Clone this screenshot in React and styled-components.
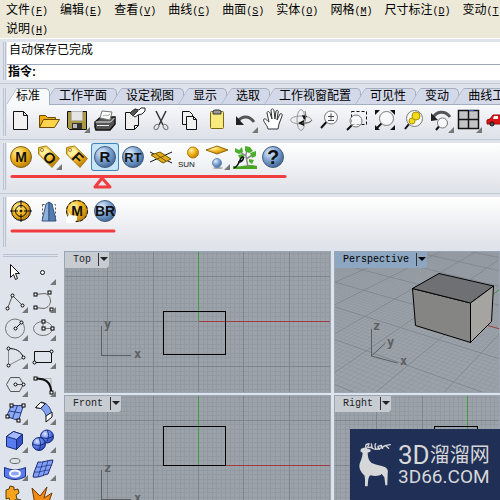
import React from "react";
import { useState } from "react";
import styled, { createGlobalStyle } from "styled-components";

const GlobalStyle = createGlobalStyle`
  * {
    box-sizing: border-box;
  }

  body {
    margin: 0;
    background: #dfe3eb;
    color: #000;
    font-family: "Liberation Sans", "Noto Sans CJK SC", sans-serif;
    font-size: 12px;
  }

  button, input {
    margin: 0;
    padding: 0;
    border: 0;
    background: none;
    color: inherit;
    font: inherit;
  }
`;

const Page = styled.div`
  display: flex;
  flex-direction: column;
  height: 100vh;
  overflow: hidden;
`;

const MenuBar = styled.nav`
  flex: none;
  height: 39px;
  padding-top: 1px;
  background: #ece9d8;
  border-bottom: 1px solid #fff;
`;

const MenuRow = styled.div`
  display: flex;
  height: 19px;
  overflow: hidden;
`;

const MenuItem = styled.button`
  flex: none;
  padding: 0 6px;
  line-height: 19px;
  white-space: nowrap;
`;

const Hotkey = styled.span`
  font-family: "Liberation Mono", monospace;
  font-size: 10px;
`;

const Band = styled.section`
  flex: none;
  display: flex;
  height: ${(props) => props.$height}px;
  padding: ${(props) => props.$top || 3}px 0 3px 3px;
  border-bottom: 1px solid ${(props) => (props.$last ? "transparent" : "#c3cad4")};
`;

const Grip = styled.div`
  flex: none;
  width: 3px;
  margin-right: 1px;
  border: solid #b9c2d0;
  border-width: 0 1px;
`;

const CommandBox = styled.div`
  flex: 1;
  min-width: 0;
  background: #fff;
`;

const History = styled.p`
  height: 23px;
  margin: 0;
  padding-left: 2px;
  border-bottom: 1px solid #9ba7b7;
  line-height: 17px;
`;

const Prompt = styled.label`
  display: flex;
  padding-left: 1px;
  font-weight: bold;
  line-height: 14px;
`;

const PromptInput = styled.input`
  flex: 1;
  min-width: 0;
  padding-left: 4px;
  outline: none;
`;

const Column = styled.div`
  flex: 1;
  min-width: 0;
`;

const TabStrip = styled.div`
  display: flex;
  height: 17px;
  overflow: hidden;
  box-shadow: inset 0 -1px #a4afc0;
`;

const Tab = styled.button`
  position: relative;
  isolation: isolate;
  flex: none;
  z-index: ${(props) => (props.$active ? 1 : 0)};
  height: 17px;
  margin-left: -6px;
  padding: 0 10px 0 15px;
  line-height: 15px;
  white-space: nowrap;

  &:first-child {
    margin-left: 0;
    padding-left: 9px;
  }

  &::before,
  &::after {
    content: "";
    position: absolute;
    z-index: -1;
    top: 0;
    bottom: ${(props) => (props.$active ? 0 : 1)}px;
    border: solid #a4afc0;
    background: ${(props) => (props.$active ? "#f8f9fb" : "#d3d9e8")};
  }

  &::before {
    left: 5px;
    width: 16px;
    border-width: 1px 0 0 1px;
    border-radius: 2px 0 0 0;
    transform: skewX(-32deg);
  }

  &:first-child::before {
    left: ${(props) => (props.$active ? 4 : 5)}px;
  }

  &::after {
    left: 14px;
    right: 0;
    border-width: 1px 1px 0 0;
    border-radius: 0 5px 0 0;
  }
`;

const ToolPanel = styled.div`
  position: relative;
  height: ${(props) => props.$height}px;
  overflow: hidden;
  background: linear-gradient(${(props) => props.$from || "#fff"}, #dfe2e9);
`;

const Tools = styled.div`
  display: flex;
  padding-top: ${(props) => props.$top || 0}px;
`;

const ToolButton = styled.button`
  flex: none;
  width: 28px;
  height: 28px;
  ${(props) =>
    props.$selected &&
    `
    border-radius: 3px;
    background: #c8e5f8;
    box-shadow: inset 0 0 0 1px #3f87b8;
  `}

  svg {
    display: block;
  }
`;

const Markup = styled.svg`
  position: absolute;
  left: 0;
  top: 0;
  pointer-events: none;
`;

const Workspace = styled.div`
  flex: 1;
  display: flex;
  min-height: 0;
  overflow: hidden;
`;

const Palette = styled.aside`
  flex: none;
  width: 64px;
  padding: 3px 0 0 1px;
`;

const PaletteGrip = styled.div`
  width: 55px;
  height: 3px;
  margin: 0 0 1px 2px;
  border: solid #b9c2d0;
  border-width: 1px 0;
`;

const PaletteGrid = styled.div`
  display: grid;
  grid-template-columns: repeat(2, 28px);
`;

const Viewports = styled.main`
  flex: 1;
  display: grid;
  grid-template-columns: 267fr 166fr;
  grid-template-rows: 142px 142px;
  gap: 2px 3px;
  min-width: 0;
`;

const Viewport = styled.section`
  position: relative;
  min-width: 0;
  overflow: hidden;
  border: 1px solid #9aa6b4;
  background: #9ba2aa;
`;

const Canvas = styled.svg`
  position: absolute;
  left: 0;
  top: 0;
  width: 100%;
  height: 100%;
`;

const ViewLabel = styled.button`
  position: relative;
  display: flex;
  align-items: center;
  height: 16px;
  padding: 0 1px 2px 8px;
  background: ${(props) => (props.$active ? "#8da6c1" : "#c7ccd2")};
  color: ${(props) => (props.$active ? "#000" : "#222")};
  font-family: "Liberation Mono", monospace;
  font-size: 10px;
  line-height: 13px;
  clip-path: polygon(0 0, 100% 0, 100% 14px, calc(100% - 2px) 100%, 0 100%);

  &::after {
    content: "";
    margin-left: 1px;
    border: solid transparent;
    border-width: 4px 4px 0;
    border-top-color: currentColor;
  }
`;

const LabelText = styled.span`
  padding-right: 7px;
  border-right: 1px solid #333;
`;

const Badge = styled.div`
  position: fixed;
  right: 0;
  bottom: 0;
  display: flex;
  align-items: center;
  gap: 5px;
  width: 150px;
  height: 71px;
  padding-left: 8px;
  background: #202f55;
  color: #d6d7d9;
`;

const BadgeText = styled.div`
  white-space: nowrap;
`;

const BadgeName = styled.div`
  display: flex;
  align-items: center;
  height: 24px;
  font-family: Roboto, "Noto Sans CJK SC", sans-serif;
  font-size: 20px;
  line-height: 24px;
`;

const BadgeBig = styled.span`
  font-size: 26px;
`;

const BadgeSite = styled.div`
  font-family: Roboto, sans-serif;
  font-size: 19px;
  line-height: 20px;
`;

const MENU = [
  ["文件", "F"],
  ["编辑", "E"],
  ["查看", "V"],
  ["曲线", "C"],
  ["曲面", "S"],
  ["实体", "O"],
  ["网格", "M"],
  ["尺寸标注", "D"],
  ["变动", "T"],
];

const TABS = [
  "标准",
  "工作平面",
  "设定视图",
  "显示",
  "选取",
  "工作视窗配置",
  "可见性",
  "变动",
  "曲线工具",
];

function Icon({ children, more }) {
  return (
    <svg width="28" height="28" viewBox="0 0 28 28" fill="none" stroke="#111">
      {children}
      {more && <path d="M27 21v6h-6z" fill="#777" stroke="none" />}
    </svg>
  );
}

function Ball({ text, color = "gold", size = 14 }) {
  return (
    <>
      <circle cx="14" cy="14" r="10.5" fill={`url(#${color})`} stroke={color === "gold" ? "#80641c" : "#435c7b"} />
      <text
        x="14"
        y={14 + size * 0.36}
        textAnchor="middle"
        fontSize={size}
        fontWeight="bold"
        fill="#111"
        stroke="none"
      >
        {text}
      </text>
    </>
  );
}

function Tag({ text }) {
  return (
    <>
      <path d="M3.500 4.500l8-1.500L24.500 15.500 17 24.500 3.500 11z" fill="url(#gold)" stroke="#a0821c" />
      <path d="M5 6l6-1 4 4-7 5-3-3z" fill="#fff09a" stroke="none" />
      <circle cx="7" cy="7" r="1.500" fill="#fff" stroke="#987a20" />
      <text
        x="14.500"
        y="20"
        textAnchor="middle"
        fontSize="15"
        fontWeight="bold"
        fill="#111"
        stroke="none"
        transform="rotate(45 14.500 15)"
      >
        {text}
      </text>
    </>
  );
}

function Lens({ x, y, r, hx, hy }) {
  const k = r * 0.7;
  return (
    <>
      <path d={`M${x - k} ${y + k}L${hx} ${hy}`} strokeWidth="2" />
      <circle cx={x} cy={y} r={r} fill="#fff" fillOpacity="0.6" stroke="#777" />
    </>
  );
}

function Nodes({ points, round }) {
  return points.map(([x, y]) => (
    <rect
      key={`${x}-${y}`}
      x={x - 1.5}
      y={y - 1.5}
      width="3"
      height="3"
      rx={round ? 1.5 : 0}
      fill="#fff"
      stroke="#000"
    />
  ));
}

const STANDARD_TOOLS = [
  ["新建", <Icon><path d="M6.500 5.500h10l4 4v14h-14z" fill="#f1f1f1" /><path d="M16.500 5.500v4h4" /></Icon>],
  ["打开", <Icon><path d="M4.500 21.500v-12h6l2 2h8v3" fill="#eda911" stroke="#6a4b00" /><path d="M4.500 21.500l4-8h16l-5 8z" fill="#ffd44d" stroke="#6a4b00" /></Icon>],
  ["保存", <Icon more><path d="M4.500 5.500h19v18h-17l-2-2z" fill="#a99a43" /><path d="M8.500 5.500h11v9h-11z" fill="#e5e5e5" stroke="#b5b5b5" /><path d="M9 17h10v6H9z" fill="#333" stroke="none" /><path d="M10 18h4v4h-4z" fill="#bbb" stroke="none" /></Icon>],
  ["打印", <Icon><path d="M4 16l6-5h14v7l-5 6H5l-1-3z" fill="#555" strokeWidth="1.500" /><path d="M9 12l2-7 10 1-2 8z" fill="#fff" stroke="#777" /><path d="M4.500 16h15l4-4M6 19.500h12" stroke="#eee" /><path d="M12 10c4-2 4 1 7-2" stroke="#999" /></Icon>],
  ["文件属性", <Icon><path d="M6.500 6.500h13v13l-4 4h-9z" fill="#eee" /><path d="M15.500 23.500v-4h4" /><path d="M11 7l5-4 4 1 2-2h4v3l-3 3-4 1-3 2z" fill="#fff" stroke="#222" /><path d="M11 7l5-4 3 2-5 5z" fill="#555" stroke="#333" /></Icon>],
  ["剪切", <Icon><path d="M9 5l7 14M19 5l-7 14" stroke="#333" strokeWidth="1.500" /><ellipse cx="9.500" cy="21" rx="2" ry="3" stroke="#777" transform="rotate(35 9.500 21)" /><ellipse cx="18.500" cy="21" rx="2" ry="3" stroke="#777" transform="rotate(-35 18.500 21)" /></Icon>],
  ["复制", <Icon><path d="M7.500 5.500h7l3 3v10h-10z" fill="#f1f1f1" /><path d="M11.500 10.500h7l3 3v10h-10z" fill="#f1f1f1" /><path d="M18.500 10.500v3h3" /></Icon>],
  ["粘贴", <Icon><rect x="7.500" y="5.500" width="13" height="17" rx="1" fill="#f9ea80" stroke="#7a6a15" /><path d="M10 8V5l2-1h4l2 1v3z" fill="#999" stroke="#333" /></Icon>],
  ["撤销", <Icon more><path d="M7 15c4-5 11-6 16 1" stroke="#555" strokeWidth="3" /><path d="M5 10v9h8z" fill="#222" stroke="none" /></Icon>],
  ["平移", <Icon><path d="M9 23c-1-5-6-8-4-10 2-1 4 3 5 3L8 7c0-2 2-2 3 0l2 6-1-9c1-2 3-1 3 1l1 8 1-8c1-1 3-1 2 2l-1 7 3-6c1-1 3 0 2 2l-3 8-1 5z" fill="#fff" stroke="#333" /></Icon>],
  ["旋转视图", <Icon><ellipse cx="14" cy="14" rx="10.500" ry="4" stroke="#999" /><ellipse cx="14" cy="14" rx="4" ry="10.500" stroke="#999" /><path d="M11 17l6-3v6zM15 9l5 1-3 4z" fill="#111" stroke="none" /><path d="M15 17c6 0 9-1 10-3M18 5c1 4 1 6 0 10" stroke="#666" /></Icon>],
  ["缩放", <Icon><Lens x={16} y={11.5} r={6.5} hx={6} hy={22} /><path d="M13 10.500h6M16 7.500v6M13 14.500h6" stroke="#444" /></Icon>],
  ["框选缩放", <Icon><path d="M8.500 5.500h15v13h-15z" strokeDasharray="3 2" /><Lens x={13} y={15} r={6} hx={4} hy={24} /></Icon>],
  ["最大范围", <Icon><Lens x={15.5} y={12.5} r={7} hx={6} hy={22} /><path d="M4 4h5L4 9zM24 4h-5l5 5zM4 24h5l-5-5zM24 24h-5l5-5z" fill="#111" stroke="none" /></Icon>],
  ["选取物件缩放", <Icon><Lens x={15.5} y={12.5} r={8} hx={6} hy={23} /><circle cx="13" cy="15" r="3" fill="#f2dc16" stroke="#a99000" /><circle cx="17" cy="10" r="4" fill="#f2dc16" stroke="#a99000" /></Icon>],
  ["复原视图", <Icon more><path d="M6 12c3-7 12-8 17-1" stroke="#555" strokeWidth="3" /><path d="M4 7v8l7-1z" fill="#222" stroke="none" /><Lens x={15.5} y={17} r={5} hx={9} hy={24} /></Icon>],
  ["四个工作视窗", <Icon more><path d="M3.500 4.500h20v18h-20zM13.500 4.500v18M3.500 13.500h20" fill="#c4c4c7" strokeWidth="1.500" /><path d="M14 4.500h5" stroke="#3650c8" /></Icon>],
  ["着色", <Icon><path d="M4 14l3-1 3-4h7l3 4h7v5H4z" fill="#d71515" stroke="#a00b0b" /><path d="M11 10h4v3h-5z" fill="#fff" stroke="none" /><circle cx="9" cy="18" r="2" fill="#555" /><circle cx="22" cy="18" r="2" fill="#555" /></Icon>],
];

const RENDER_TOOLS = [
  ["M", <Icon><Ball text="M" /></Icon>],
  ["O", <Icon more><Tag text="O" /></Icon>],
  ["F", <Icon><Tag text="F" /></Icon>],
  ["R", <Icon><Ball text="R" color="steel" size={15} /></Icon>],
  ["RT", <Icon><Ball text="RT" color="steel" size={13} /></Icon>],
  ["地平面", <Icon><path d="M3 9l22 11M3 19L25 9" /><path d="M4 12l9-3 11 7-8 4z" fill="#e2ad18" stroke="#735600" /><path d="M9 11l10 7M10 16l9-4" stroke="#735600" /></Icon>],
  ["太阳", <Icon><circle cx="18" cy="9.500" r="5.500" fill="url(#gold)" stroke="#b57b0c" /><text x="3" y="24" fontSize="8" fill="#111" stroke="none">SUN</text></Icon>],
  ["环境", <Icon more><path d="M3 7l11-4 11 4-11 4z" fill="url(#gold)" stroke="#8f6a10" /><ellipse cx="15" cy="25" rx="5" ry="1" fill="#aaa" stroke="none" /><circle cx="14" cy="20" r="4.500" fill="url(#steel)" stroke="#658db9" /></Icon>],
  ["植物", <Icon><path d="M2 23c8 2 15-3 24 0v3H2z" fill="#47a51f" stroke="none" /><path d="M17 24l-2-11-6-4M15 16l8-5M15 12l1-6" stroke="#888" strokeWidth="1.500" /><path d="M4 5l4 2 3-3 1 5-4 2-4-2zM14 3l5 1 3 4-4 2-4-2zM19 10l6-2v5l-4 2zM7 12l5-1 2 4-5 1zM18 16l5 1-2 4-3-2z" fill="#4cae2d" stroke="none" /><path d="M3 25c6-3 5-9 8-11 3 0 1 5-4 5" strokeWidth="1.500" /></Icon>],
  ["帮助", <Icon><Ball text="?" color="steel" size={20} /></Icon>],
];

const EXTRA_TOOLS = [
  ["目标", <Icon><circle cx="14" cy="14" r="9.500" fill="url(#gold)" /><circle cx="14" cy="14" r="5.500" /><path d="M14 3v8M14 17v8M3 14h8M17 14h8" /><circle cx="14" cy="14" r="1" fill="#111" /></Icon>],
  ["镜像", <Icon><path d="M7.500 7.500h13v16h-13z" stroke="#555" strokeDasharray="2 2" /><path d="M7 24l4-17 3-2v19z" fill="#8fb0dc" stroke="#33557f" /><path d="M14 5l3 2 4 17h-7z" fill="#527cb2" stroke="#33557f" /></Icon>],
  ["材质拾取", <Icon><Ball text="M" /><circle cx="14" cy="14" r="10.500" strokeDasharray="3 2" /><path d="M3 26v-5l3-3-1-4 3 4 6 1v4l-3 3z" fill="#fff" stroke="none" /></Icon>],
  ["BR", <Icon><Ball text="BR" color="steel" size={14} /></Icon>],
];

const PALETTE_TOOLS = [
  ["选取", <Icon><path d="M9.500 6.500v13l3-3 2 5 2-1-2-5h4z" fill="#fff" /></Icon>],
  ["点", <Icon more><circle cx="13.500" cy="14.500" r="2" fill="#fff" /></Icon>],
  ["多重直线", <Icon more><path d="M6.500 22.500l5-13 10 10" stroke="#555" /><Nodes round points={[[6.5, 22.5], [11.5, 9.5], [21.5, 19.5]]} /></Icon>],
  ["曲线", <Icon more><path d="M6 8.500l10-1c7 2 8 13-1 15l-9-1" stroke="#666" /><Nodes points={[[6.5, 8.5], [20.5, 6.5], [6.5, 21.5], [22.5, 23.5]]} /></Icon>],
  ["圆", <Icon more><circle cx="14" cy="14.500" r="9.500" stroke="#777" /><path d="M14.500 14.500l6-6" /><Nodes round points={[[14.5, 14.5], [20.5, 8.5]]} /></Icon>],
  ["椭圆", <Icon more><ellipse cx="14" cy="14.500" rx="9.500" ry="7" stroke="#777" /><path d="M14 7.500v7h9" stroke="#777" /><Nodes points={[[14.5, 7.5], [14.5, 14.5], [23.5, 14.5]]} /></Icon>],
  ["圆弧", <Icon more><path d="M22.500 15.500l-15 8v-17" stroke="#888" /><path d="M7.500 6.500c7 0 12 2 15 9" /><Nodes round points={[[7.5, 6.5], [22.5, 15.5], [7.5, 23.5]]} /></Icon>],
  ["矩形", <Icon more><path d="M5.500 9.500h17v11h-17z" /><Nodes round points={[[22.5, 9.5], [5.5, 20.5]]} /></Icon>],
  ["多边形", <Icon more><path d="M5.500 14.500l4-7h9l4 7-4 7h-9zM14.500 14.500h8" stroke="#555" /><Nodes round points={[[14.5, 14.5], [22.5, 14.5]]} /></Icon>],
  ["曲线圆角", <Icon more><path d="M7 8.500h15v14" stroke="#aaa" /><path d="M6.500 8.500c10 0 15 3 16 14" strokeWidth="2" /><Nodes points={[[6.5, 8.5], [22.5, 22.5]]} /></Icon>],
  ["曲面", <Icon more><path d="M10.500 7.500h12l-5 15-12-4z" fill="#8eaaf4" stroke="#253b84" /><path d="M16.500 7.500l-5 13M8 13l12 2" stroke="#253b84" /><Nodes points={[[10.5, 7.5], [22.5, 7.5], [17.5, 22.5], [6.5, 18.5]]} /></Icon>],
  ["放样", <Icon more><path d="M7 10c6-1 10 4 11 13l5-5C22 9 18 5 12 4z" fill="#83a1f2" stroke="#334984" /><path d="M6.500 9.500l5-5 5 1-5 5zM17 18l6-4v5l-6 5z" fill="#fff" /></Icon>],
  ["立方体", <Icon more><path d="M5.500 10.500l7-5 9 3v9l-6 6-10-3z" fill="#5a7cf0" stroke="#172b77" /><path d="M5.500 10.500l7-5 9 3-6 5z" fill="#a8baff" stroke="#172b77" /><path d="M15.500 13.500v10l6-6v-9z" fill="#3553c6" stroke="#172b77" /></Icon>],
  ["布尔运算", <Icon more><circle cx="18" cy="10.500" r="6.500" fill="url(#blue)" stroke="#172b77" /><circle cx="10" cy="18" r="6.500" fill="url(#blue)" stroke="#172b77" /><path d="M4 18c4 2 8 2 12-1M12 11c4 2 8 2 12-1M10 12c2 4 2 8 0 12M18 4c2 4 2 7 0 11" stroke="#172b77" /></Icon>],
  ["投影", <Icon more><ellipse cx="14" cy="7" rx="5" ry="2.500" stroke="#666" /><path d="M3.500 13.500c7 3 14 3 21 0v9c-7 4-14 4-21 0z" fill="#5a7cf0" stroke="#172b77" /><ellipse cx="14" cy="19.500" rx="5" ry="3" fill="#8da6ff" stroke="#fff" strokeWidth="2" /></Icon>],
  ["网格", <Icon more><path d="M9 8c5 1 9-2 15-2-1 5-3 8-5 14-5 1-9 4-15 3 1-6 3-9 5-15z" fill="#829ffa" stroke="#1b2d70" /><path d="M14 8L9 23M19 7l-5 15M7 13c6 1 9-2 15-2M5 18c6 1 9-2 15-2" stroke="#1b2d70" strokeOpacity="0.7" /></Icon>],
  ["组合", <Icon><path d="M5 8l3-1 1-3 4 1v3l4-1 1 4-3 2 1 4 4 1v5l-4 4H6v-6l3-2-1-3-3 1z" fill="#f5a41c" stroke="#563b0e" /><path d="M12 19l4-2 2 4 6 2v5H12z" fill="#fff" stroke="#555" /></Icon>],
  ["炸开", <Icon><path d="M3 6l8 8 7-9-3 11 8-5-6 17H7z" fill="#f18a12" stroke="#6e3905" /></Icon>],
];

// x, y: where the two axes cross, in pixels from the corner of the view
function FlatGrid({ x, y }) {
  const step = 4.53;
  const lines = [];
  for (let i = -30; i <= 160; i++) {
    lines.push({ i, vx: Math.round(x + i * step), hy: Math.round(y + i * step) });
  }
  const draw = (list, stroke) => (
    <path
      stroke={stroke}
      d={list
        .map(({ vx, hy }) => `M${vx + 0.5} 0v200M0 ${hy + 0.5}h900`)
        .join("")}
    />
  );
  return (
    <>
      {draw(lines.filter(({ i }) => i % 10 !== 0), "#9299a0")}
      {draw(lines.filter(({ i }) => i % 10 === 0), "#7f858c")}
    </>
  );
}

// ground plane point -> screen point of the perspective view
function project(x, y) {
  const w = 0.9467 - 0.0391 * x + 0.0903 * y;
  const px = (394.9 + 90.4 * x + 102.2 * y) / w;
  const py = (209.5 + 21.6 * x - 33.8 * y) / w;
  return `${(px / 3 - 10).toFixed(1)} ${(py / 3 - 7).toFixed(1)}`;
}

function PerspectiveGrid() {
  let minor = "";
  let major = "";
  for (let i = -100; i <= 100; i++) {
    const n = i / 10;
    let line = "";
    if (n <= 6) line += `M${project(n, -5)}L${project(n, 10)}`;
    if (n >= -5) line += `M${project(-10, n)}L${project(6, n)}`;
    if (i % 10 === 0) major += line;
    else minor += line;
  }
  return (
    <>
      <path d={minor} stroke="#8f969d" strokeOpacity="0.55" />
      <path d={major} stroke="#82888f" />
      <path d={`M${project(0, 0)}L${project(6, 0)}`} stroke="#a23c3c" />
      <path d={`M${project(0, 0)}L${project(0, 10)}`} stroke="#3f9a42" />
    </>
  );
}

function AxisText({ x, y, children }) {
  return (
    <text
      x={x}
      y={y}
      fill="#5b5e62"
      fontFamily="DejaVu Sans Mono, monospace"
      fontSize="12"
      fontWeight="bold"
    >
      {children}
    </text>
  );
}

function View({ name, active, children }) {
  return (
    <Viewport>
      <Canvas fill="none">{children}</Canvas>
      <ViewLabel $active={active}>
        <LabelText>{name}</LabelText>
      </ViewLabel>
    </Viewport>
  );
}

function ToolList({ items, selected }) {
  return items.map(([label, icon]) => (
    <ToolButton key={label} aria-label={label} $selected={label === selected}>
      {icon}
    </ToolButton>
  ));
}

const Defs = styled.svg`
  position: absolute;
  width: 0;
  height: 0;
`;

function Gradients() {
  const colors = {
    gold: ["#fff3a8", "#f3b51d", "#b97808"],
    steel: ["#e4f0ff", "#7fa5d2", "#3f6596"],
    blue: ["#dfe8ff", "#5f82f2", "#2742ad"],
  };
  return (
    <Defs aria-hidden="true">
      <defs>
        {Object.entries(colors).map(([id, [light, mid, dark]]) => (
          <radialGradient key={id} id={id} cx="0.35" cy="0.3" r="0.75">
            <stop offset="0" stopColor={light} />
            <stop offset="0.5" stopColor={mid} />
            <stop offset="1" stopColor={dark} />
          </radialGradient>
        ))}
      </defs>
    </Defs>
  );
}

function Menu({ name, hotkey }) {
  return (
    <MenuItem>
      {name}
      <Hotkey>
        (<u>{hotkey}</u>)
      </Hotkey>
    </MenuItem>
  );
}

export default function App() {
  const [tab, setTab] = useState("标准");
  const [command, setCommand] = useState("");

  return (
    <Page>
      <GlobalStyle />
      <Gradients />
      <MenuBar>
        <MenuRow>
          {MENU.map(([name, hotkey]) => (
            <Menu key={name} name={name} hotkey={hotkey} />
          ))}
        </MenuRow>
        <MenuRow>
          <Menu name="说明" hotkey="H" />
        </MenuRow>
      </MenuBar>

      <Band $height={45}>
        <Grip />
        <CommandBox>
          <History>自动保存已完成</History>
          <Prompt>
            指令:
            <PromptInput
              value={command}
              onChange={(e) => setCommand(e.target.value)}
            />
          </Prompt>
        </CommandBox>
      </Band>

      <Band $height={56} $top={4}>
        <Grip />
        <Column>
          <TabStrip role="tablist">
            {TABS.map((name) => (
              <Tab
                key={name}
                role="tab"
                aria-selected={name === tab}
                $active={name === tab}
                onClick={() => setTab(name)}
              >
                {name}
              </Tab>
            ))}
          </TabStrip>
          <ToolPanel $height={31} $from="#f8f9fb">
            <Tools $top={1}>
              <ToolList items={STANDARD_TOOLS} />
            </Tools>
          </ToolPanel>
        </Column>
      </Band>

      <Band $height={54}>
        <Grip />
        <Column>
          <ToolPanel $height={48}>
            <Tools>
              <ToolList items={RENDER_TOOLS} selected="R" />
            </Tools>
            <Markup width="290" height="48" fill="none" stroke="#f23d40" strokeWidth="3" strokeLinecap="round">
              <path d="M5 33.500h273" />
              <path d="M95 35l-7 9h15z" strokeLinejoin="round" />
            </Markup>
          </ToolPanel>
        </Column>
      </Band>

      <Band $height={57} $last>
        <Grip />
        <Column>
          <ToolPanel $height={50}>
            <Tools>
              <ToolList items={EXTRA_TOOLS} />
            </Tools>
            <Markup width="290" height="48" fill="none" stroke="#f23d40" strokeWidth="3" strokeLinecap="round">
              <path d="M5 34h102" />
            </Markup>
          </ToolPanel>
        </Column>
      </Band>

      <Workspace>
        <Palette>
          <PaletteGrip />
          <PaletteGrid>
            <ToolList items={PALETTE_TOOLS} />
          </PaletteGrid>
        </Palette>

        <Viewports>
          <View name="Top">
            <g shapeRendering="crispEdges">
              <FlatGrid x={133} y={69} />
              <path d="M133.500 0v69" stroke="#3f9a42" />
              <path d="M134 69.500h800" stroke="#a23c3c" />
              <path d="M98.500 59.500h62v43h-62z" stroke="#000" />
              <path d="M36.500 74v29.500h29" stroke="#5b5e62" />
            </g>
            <AxisText x={39} y={76}>y</AxisText>
            <AxisText x={69} y={106}>x</AxisText>
          </View>

          <View name="Perspective" active>
            <PerspectiveGrid />
            <g stroke="#000" strokeLinejoin="round">
              <path d="M77.500 36.500L80.500 73.500 135.500 90.500V51z" fill="#858583" />
              <path d="M77.500 36.500L104 21.500 158.500 34 135.500 51z" fill="#6f7073" />
              <path d="M135.500 51L158.500 34 156.500 69.500 135.500 90.500z" fill="#a5a4a1" />
            </g>
            <path d="M36.500 77v27l26 7M36.500 104l14-13" stroke="#5b5e62" />
            <AxisText x={38} y={78}>z</AxisText>
            <AxisText x={52} y={94}>y</AxisText>
            <AxisText x={65} y={113}>x</AxisText>
          </View>

          <View name="Front">
            <g shapeRendering="crispEdges">
              <FlatGrid x={133} y={69} />
              <path d="M133.500 0v69" stroke="#3f9a42" />
              <path d="M134 69.500h800" stroke="#a23c3c" />
              <path d="M98.500 30.500h62v39h-62z" stroke="#000" />
              <path d="M36.500 74v29.500h29" stroke="#5b5e62" />
            </g>
            <AxisText x={39} y={76}>z</AxisText>
            <AxisText x={69} y={106}>x</AxisText>
          </View>

          <View name="Right">
            <g shapeRendering="crispEdges">
              <FlatGrid x={132} y={69} />
              <path d="M132.500 0v69" stroke="#3f9a42" />
              <path d="M99.500 30.500h43v39h-43z" stroke="#000" />
            </g>
          </View>
        </Viewports>
      </Workspace>

      <Badge>
        <svg width="35" height="47" viewBox="100 155 105 141" fill="#d6d7d9">
          <path d="M109 178l13-4 4 3 12 4-1 6-8 3c0 14 4 25 12 31 13 6 29 8 39 12 9 4 11 12 9 20l-1 35h-6l-3-24-8-10c-7 7-22 7-33 4-8 4-7 14-9 33h-8c0-14 1-24-2-33-12-12-17-22-14-35 3-9 8-18 9-32l-7-5z" />
          <path
            d="M125 176c-4-8-2-10 4-12M129 174c2-6 4-8 4-12M132 175c9-5 9 5 21 5 11 0 21-6 28-11l16-3M143 177l-3-13M153 179c0-7-6-10 0-16M164 180c-4-7-8-9 0-10l7-2M174 177l-5-8M184 170l8 7"
            fill="none"
            stroke="#d6d7d9"
            strokeWidth="4"
            strokeLinecap="round"
          />
        </svg>
        <BadgeText>
          <BadgeName>
            <BadgeBig>3D</BadgeBig>溜溜网
          </BadgeName>
          <BadgeSite>3D66.COM</BadgeSite>
        </BadgeText>
      </Badge>
    </Page>
  );
}
